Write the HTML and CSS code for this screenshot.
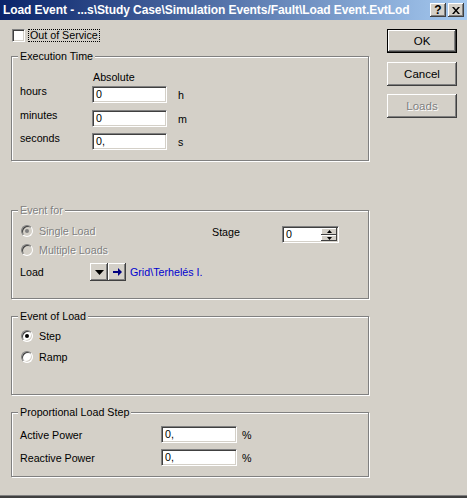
FILE: index.html
```html
<!DOCTYPE html>
<html>
<head>
<meta charset="utf-8">
<link rel="stylesheet" href="styles.css">
</head>
<body>
<div class="dialog">
  <div class="titlebar">
    <span class="title">Load Event - ...s\Study Case\Simulation Events/Fault\Load Event.EvtLod</span>
    <div class="tbtns">
      <span class="tbtn">?</span>
      <span class="tbtn"><svg width="8" height="7" viewBox="0 0 8 7"><path d="M0 0h2l2 2.4L6 0h2L5 3.5 8 7H6L4 4.6 2 7H0l3-3.5z" fill="#000"/></svg></span>
    </div>
  </div>
  <div class="client">
    <div class="main">
      <div class="chkrow"><span class="chk"></span><span class="focus">Out of Service</span></div>

      <div class="group g-exec">
        <span class="legend">Execution Time</span>
        <div class="abs">Absolute</div>
        <div class="frow"><span class="lbl">hours</span><span class="edit">0</span><span class="unit">h</span></div>
        <div class="frow r2"><span class="lbl">minutes</span><span class="edit">0</span><span class="unit">m</span></div>
        <div class="frow r3"><span class="lbl">seconds</span><span class="edit">0,</span><span class="unit">s</span></div>
      </div>

      <div class="group g-for">
        <span class="legend dis">Event for</span>
        <div class="forbody">
          <div class="forleft">
            <div class="rrow dis"><span class="radio disabled on"></span><span>Single Load</span></div>
            <div class="rrow dis"><span class="radio disabled"></span><span>Multiple Loads</span></div>
            <div class="loadrow">
              <span class="loadlbl">Load</span>
              <span class="sbtn"><svg width="9" height="5" viewBox="0 0 9 5"><path d="M0 0h9L4.5 5z" fill="#000"/></svg></span>
              <span class="sbtn"><svg width="9" height="8" viewBox="0 0 9 8"><path d="M0 3h5V0l4 4-4 4V5H0z" fill="#000080"/></svg></span>
              <span class="link">Grid\Terhelés I.</span>
            </div>
          </div>
          <div class="stage">
            <span class="stagelbl">Stage</span>
            <span class="spin">
              <span class="spintxt">0</span>
              <span class="spinbtns">
                <span class="sb up"><svg width="5" height="3" viewBox="0 0 5 3"><path d="M0 3h5L2.5 0z" fill="#000"/></svg></span>
                <span class="sb dn"><svg width="5" height="3" viewBox="0 0 5 3"><path d="M0 0h5L2.5 3z" fill="#000"/></svg></span>
              </span>
            </span>
          </div>
        </div>
      </div>

      <div class="group g-evl">
        <span class="legend">Event of Load</span>
        <div class="rrow2 first"><span class="radio on"></span><span>Step</span></div>
        <div class="rrow2"><span class="radio"></span><span>Ramp</span></div>
      </div>

      <div class="group g-prop">
        <span class="legend">Proportional Load Step</span>
        <div class="prow first"><span class="plbl">Active Power</span><span class="edit pedit">0,</span><span class="punit">%</span></div>
        <div class="prow"><span class="plbl">Reactive Power</span><span class="edit pedit">0,</span><span class="punit">%</span></div>
      </div>
    </div>

    <div class="side">
      <div class="btn default">OK</div>
      <div class="btn b2">Cancel</div>
      <div class="btn b3 dis">Loads</div>
    </div>
  </div>
</div>
</body>
</html>
```
FILE: styles.css
```css
* { box-sizing: border-box; }
html, body { margin: 0; padding: 0; }
body {
  width: 467px;
  height: 498px;
  background: #d4d0c8;
  font-family: "Liberation Sans", Arial, sans-serif;
  font-size: 10.7px;
  color: #000;
  overflow: hidden;
}
.dialog {
  height: 498px;
  display: flex;
  flex-direction: column;
  box-shadow: inset 0 -2px #404040, inset 0 -3px #808080;
}
.titlebar {
  height: 20px;
  flex: none;
  display: flex;
  align-items: center;
  background: linear-gradient(to right, #0a246a, #a6caf0);
  padding: 0 3px 0 3px;
}
.title {
  color: #fff;
  font-weight: bold;
  font-size: 12px;
  letter-spacing: -0.08px;
  white-space: nowrap;
  flex: 1;
  overflow: hidden;
}
.tbtns { display: flex; gap: 2px; }
.tbtn {
  width: 16px;
  height: 14px;
  background: #d4d0c8;
  box-shadow: inset -1px -1px #404040, inset 1px 1px #fff, inset -2px -2px #808080;
  display: flex;
  align-items: center;
  justify-content: center;
  font-weight: bold;
  font-size: 12px;
  line-height: 14px;
}
.client {
  display: flex;
  padding: 9px 0 0 11px;
}
.main { width: 359px; display: flex; flex-direction: column; }
.side { margin-left: 17px; display: flex; flex-direction: column; }

.chkrow { display: flex; align-items: center; height: 13px; }
.chk {
  width: 13px; height: 13px; margin-left: 1px;
  background: #fff;
  border: 1px solid; border-color: #808080 #fff #fff #808080;
  box-shadow: inset 1px 1px #404040, inset -1px -1px #d4d0c8;
}
.focus {
  margin-left: 3px;
  border: 1px dotted #000;
  padding: 0 1px;
  line-height: 11px;
  height: 13px;
}

.group {
  width: 358px;
  border: 1px solid #808080;
  box-shadow: inset 1px 1px #fff, 1px 1px #fff;
  display: flex;
  flex-direction: column;
  padding: 0 0 0 8px;
}
.legend {
  align-self: flex-start;
  background: #d4d0c8;
  padding: 0 2px;
  margin: -7px 0 -6px -2px;
  height: 13px;
  line-height: 13px;
}
.dis { color: #808080; text-shadow: 1px 1px #fff; }

.g-exec { margin-top: 14px; height: 105px; }
.abs { margin: 14px 0 0 73px; line-height: 13px; height: 13px; }
.frow { display: flex; align-items: flex-start; margin-top: 2px; height: 17px; }
.frow.r2 { margin-top: 7px; }
.frow.r3 { margin-top: 6px; }
.lbl { width: 72px; line-height: 13px; margin-top: -1px; }
.edit {
  width: 75px; height: 17px;
  background: #fff;
  border: 1px solid; border-color: #808080 #fff #fff #808080;
  box-shadow: inset 1px 1px #404040, inset -1px -1px #d4d0c8;
  padding: 1px 0 0 3px;
  line-height: 13px;
}
.unit { margin-left: 11px; line-height: 13px; margin-top: 3px; }

.g-for { margin-top: 49px; height: 89px; }
.forbody { display: flex; }
.forleft { width: 192px; margin-top: 10px; display: flex; flex-direction: column; }
.rrow { display: flex; align-items: center; height: 19px; }
.radio {
  position: relative;
  width: 12px; height: 12px; margin: 0 6px 0 1px;
  border-radius: 50%;
  background: #fff;
  border: 1px solid; border-color: #808080 #fff #fff #808080;
  box-shadow: inset 1px 1px #404040, inset -1px -1px #d4d0c8;
  flex: none;
}
.radio.disabled { background: #d4d0c8; }
.radio.on::after {
  content: "";
  position: absolute;
  left: 3px; top: 3px;
  width: 4px; height: 4px;
  border-radius: 50%;
  background: #000;
}
.radio.disabled.on::after { background: #808080; }
.loadrow { display: flex; align-items: center; margin-top: 4px; height: 18px; }
.loadlbl { width: 70px; }
.sbtn {
  width: 18px; height: 18px;
  background: #d4d0c8;
  box-shadow: inset -1px -1px #404040, inset 1px 1px #fff, inset -2px -2px #808080;
  display: flex; align-items: center; justify-content: center;
}
.link { margin-left: 4px; color: #0000d0; }
.stage { display: flex; align-items: flex-start; margin-top: 15px; }
.stagelbl { width: 70px; line-height: 13px; }
.spin {
  width: 57px; height: 17px;
  background: #fff;
  border: 1px solid; border-color: #808080 #fff #fff #808080;
  box-shadow: inset 1px 1px #404040, inset -1px -1px #d4d0c8;
  padding: 1px;
  display: flex;
}
.spintxt { flex: 1; padding-left: 2px; line-height: 13px; }
.spinbtns { width: 16px; display: flex; flex-direction: column; }
.sb {
  background: #d4d0c8;
  box-shadow: inset -1px -1px #404040, inset 1px 1px #fff;
  display: flex; align-items: center; justify-content: center;
}
.sb.up { height: 7px; }
.sb.dn { height: 6px; }

.g-evl { margin-top: 17px; height: 79px; }
.rrow2 { display: flex; align-items: center; height: 21px; }
.rrow2.first { margin-top: 8px; }

.g-prop { margin-top: 17px; height: 65px; }
.prow { display: flex; align-items: center; height: 17px; margin-top: 6px; }
.prow.first { margin-top: 13px; }
.plbl { width: 141px; }
.pedit { width: 76px; }
.punit { margin-left: 5px; }

.btn {
  width: 70px; height: 24px;
  display: flex; align-items: center; justify-content: center;
  background: #d4d0c8;
  box-shadow: inset -1px -1px #404040, inset 1px 1px #fff, inset -2px -2px #808080;
  font-size: 11.5px;
}
.btn.default { border: 1px solid #000; }
.btn.b2 { margin-top: 9px; }
.btn.b3 { margin-top: 8px; }
```
